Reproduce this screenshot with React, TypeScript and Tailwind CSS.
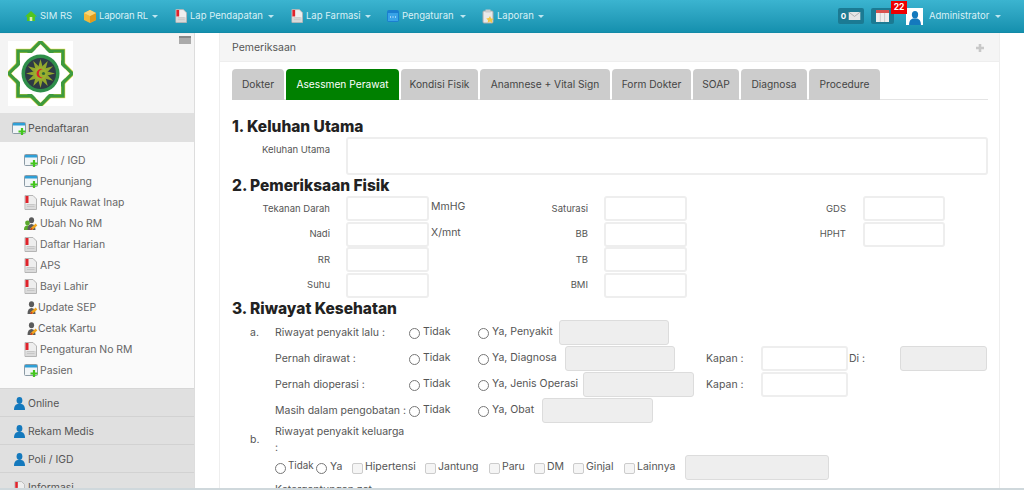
import React from "react";

const Doc = ({ c = "w-[13px] h-[15px]" }: { c?: string }) => (
  <svg viewBox="0 0 13 15" className={c + " shrink-0"}>
    <path d="M1 .5h8l3.5 3.5v10.5H1z" fill="#eee" stroke="#b5b5b5" />
    <rect x="1.5" y="1" width="3" height="7" fill="#e0232b" />
    <path d="M3 9.5h7.5M3 11.5h7.5" stroke="#bbb" />
    <rect x="2" y="9" width="10" height="5" fill="#cfcfcf" opacity=".6" />
  </svg>
);
const WinPlus = ({ c = "w-[14px] h-[13px]" }: { c?: string }) => (
  <svg viewBox="0 0 14 13" className={c + " shrink-0"}>
    <rect x=".5" y=".5" width="13" height="11" rx="1" fill="#f1f5f7" stroke="#8b9aa5" />
    <rect x="1" y="1" width="12" height="2.5" fill="#2f9fd6" />
    <path d="M10 6v7M6.5 9.5h7" stroke="#43c51e" strokeWidth="2.2" />
  </svg>
);
const Person = ({ color = "#1479bd", c = "w-[11px] h-[13px]" }: { color?: string; c?: string }) => (
  <svg viewBox="0 0 11 13" className={c + " shrink-0"}>
    <ellipse cx="5.5" cy="3.5" rx="2.9" ry="3.4" fill={color} />
    <path d="M0 13c0-4 1.6-5.5 3.6-6h3.8c2 .5 3.6 2 3.6 6z" fill={color} />
  </svg>
);
const UserPen = ({ green = false }: { green?: boolean }) => (
  <svg viewBox="0 0 14 13" className="w-[14px] h-[13px] shrink-0">
    {green && <circle cx="3.5" cy="6" r="2.4" fill="#5aa82c" />}
    {green && <path d="M0 13c0-3.5 1.5-4.5 3.5-4.5S7 9.5 7 13z" fill="#5aa82c" />}
    <ellipse cx="7.5" cy="3.2" rx="2.6" ry="3" fill="#5b5b5b" />
    <path d="M3.5 13c0-4 1.5-6 4-6s4 2 4 6z" fill="#5b5b5b" />
    <path d="M7 12.5l5.5-5" stroke="#f2a51d" strokeWidth="2.4" />
    <path d="M7 13l1-2" stroke="#d63a20" strokeWidth="1.4" />
  </svg>
);
const Caret = () => <span className="ml-[5px] w-0 h-0 border-x-[3px] border-x-transparent border-t-[3px] border-t-[#bfe6f0] shrink-0" />;

const Logo = () => {
  const rays = Array.from({ length: 12 }, (_, i) => i * 30);
  return (
    <svg viewBox="0 0 65 65" className="w-[65px] h-[65px] bg-white block">
      <g transform="translate(32.5 32.5)">
        <rect x="-22.5" y="-22.5" width="45" height="45" fill="none" stroke="#d8d23a" strokeWidth="4.4" />
        <rect x="-22.5" y="-22.5" width="45" height="45" transform="rotate(45)" fill="none" stroke="#d8d23a" strokeWidth="4.4" />
        <rect x="-22.5" y="-22.5" width="45" height="45" fill="none" stroke="#3d9a3f" strokeWidth="3.2" />
        <rect x="-22.5" y="-22.5" width="45" height="45" transform="rotate(45)" fill="none" stroke="#3d9a3f" strokeWidth="3.2" />
        <rect x="-20.5" y="-20.5" width="41" height="41" fill="#fff" />
        <rect x="-20.5" y="-20.5" width="41" height="41" transform="rotate(45)" fill="#fff" />
        <circle r="19" fill="#2f8f4a" />
        <circle r="15.5" fill="#2e3a44" />
        {rays.map((a) => (
          <path key={a} d="M-2.6 -5 L0 -14.5 L2.6 -5 Z" fill="#93a82e" transform={`rotate(${a})`} />
        ))}
        <circle r="6.5" fill="#9bb02f" />
        <path d="M2.5 -4.2A4.6 4.6 0 1 0 2.5 4.2A3.6 3.6 0 1 1 2.5 -4.2Z" fill="#d8262c" />
        <circle cx="3" cy="0" r="1.6" fill="#2e6b36" />
      </g>
    </svg>
  );
};

const Section = ({ icon, label }: { icon: React.ReactNode; label: string }) => (
  <div className="h-[28px] bg-[#e0e0e0] border-b border-[#d2d2d2] flex items-center pl-[14px] gap-[4px] text-[10.4px] text-[#555] pt-[2px]">
    <span className="w-[10px] flex justify-center">{icon}</span>
    <span>{label}</span>
  </div>
);

const SubItem = ({ icon, label, gap = "gap-[3px]" }: { icon: React.ReactNode; label: string; gap?: string }) => (
  <div className={"h-[21px] flex items-center " + gap + " text-[10.4px] text-[#666]"}>
    {icon}
    <span>{label}</span>
  </div>
);

const Txt = ({ children, c = "" }: { children: React.ReactNode; c?: string }) => <span className={"shrink-0 " + c}>{children}</span>;
const Input = ({ c }: { c: string }) => <input className={"h-[25px] shrink-0 rounded-[3px] border-2 border-[#eeeeee] bg-white " + c} />;
const Dis = ({ c }: { c: string }) => <input disabled className={"h-[25px] shrink-0 rounded-[3px] border border-[#dcdcdc] bg-[#eeeeee] " + c} />;
const Radio = () => <input type="radio" className="w-[11px] h-[11px] m-0 shrink-0 mt-[2px] appearance-none rounded-full border border-[#777] bg-white" />;
const Check = () => <input type="checkbox" className="w-[11px] h-[11px] m-0 shrink-0 mt-[2px] appearance-none rounded-[2px] border border-[#cccccc] bg-[#f5f5f5]" />;

const Tab = ({ w, label, active = false }: { w: string; label: string; active?: boolean }) => (
  <div className={"h-[31px] rounded-t-[4px] flex items-center justify-center text-[10.2px] whitespace-nowrap " + w + " " + (active ? "bg-[#008000] text-white" : "bg-[#cccccc] text-[#444]")}>{label}</div>
);

const PFRow = ({ a, unit, b, c }: { a: string; unit?: string; b: string; c?: string }) => (
  <div className="h-[25.5px] flex items-center text-[9.5px] text-[#555]">
    <div className="w-[98px] text-right">{a}</div>
    <Input c="ml-[16px] w-[83px]" />
    <div className="w-[61px] pl-[2px] text-[10.5px] pb-[3px]">{unit}</div>
    <div className="w-[98px] text-right">{b}</div>
    <Input c="ml-[16px] w-[83px]" />
    <div className="w-[61px]" />
    <div className="w-[98px] text-right">{c}</div>
    {c ? <Input c="ml-[17px] w-[82px]" /> : null}
  </div>
);

const HRow = ({ mark, label, ya, yaW, input, children }: { mark?: string; label: string; ya: string; yaW: string; input: string; children?: React.ReactNode }) => (
  <div className="h-[26px] flex items-center pl-[18px] text-[10.5px] text-[#555]">
    <Txt c="w-[25px] pt-[1px]">{mark}</Txt>
    <Txt c="w-[134px] pt-[1px]">{label}</Txt>
    <div className={"w-[69px] flex items-center gap-[3px] shrink-0"}><Radio /><span className="pb-[1px]">Tidak</span></div>
    <div className={"flex items-center gap-[3px] shrink-0 " + yaW}><Radio /><span className="pb-[1px]">{ya}</span></div>
    <Dis c={input} />
    {children}
  </div>
);

const App = () => (
  <div className="w-[1024px] h-[490px] overflow-hidden relative bg-white font-['Inter',sans-serif]">
    <header className="h-[33px] bg-gradient-to-b from-[#3bb4d0] to-[#1490ae] border-b border-[#128aa7] flex items-center text-[9.5px] text-[#d9f1f6] pl-[25px] whitespace-nowrap">
      <svg viewBox="0 0 12 12" className="w-[12px] h-[12px] shrink-0"><path d="M6 1l6 5.5h-2V11H2V6.5H0z" fill="#52c51f" /><rect x="4.7" y="7" width="2.6" height="4" fill="#d8f0b0" /></svg>
      <span className="ml-[3px] w-[44px] shrink-0">SIM RS</span>
      <svg viewBox="0 0 12 13" className="w-[12px] h-[13px] shrink-0"><path d="M6 0l6 3v7l-6 3-6-3V3z" fill="#f0b93a" /><path d="M6 6l6-3v7l-6 3z" fill="#e09a1c" /><path d="M0 3l6-3 6 3-6 3z" fill="#f8d577" /></svg>
      <span className="ml-[3px] w-[48px] shrink-0 tracking-[-0.2px]">Laporan RL</span><Caret />
      <Doc c="ml-[17px] w-[12px] h-[14px]" />
      <span className="ml-[3px] w-[73px] shrink-0">Lap Pendapatan</span><Caret />
      <Doc c="ml-[17px] w-[12px] h-[14px]" />
      <span className="ml-[3px] w-[54px] shrink-0">Lap Farmasi</span><Caret />
      <svg viewBox="0 0 12 12" className="ml-[16px] w-[12px] h-[12px] shrink-0"><rect width="12" height="12" rx="2" fill="#1b7fd0" /><rect x="1" y="3" width="10" height="8" fill="#38a3e8" /><path d="M3 7h1M5.5 7h1M8 7h1" stroke="#fff" strokeWidth="1.2" /></svg>
      <span className="ml-[3px] w-[53px] shrink-0">Pengaturan</span><Caret />
      <svg viewBox="0 0 12 15" className="ml-[16px] w-[12px] h-[15px] shrink-0"><rect x="1" y="2" width="10" height="12" rx="1" fill="#e9e9e9" stroke="#aaa" /><rect x="3.5" y=".5" width="5" height="3" fill="#ccc" /><path d="M8 7l1.2 2.4 2.6.4-1.9 1.8.5 2.6L8 12.6 5.6 13.8l.5-2.6-1.9-1.8 2.6-.4z" fill="#f3c646" /></svg>
      <span className="ml-[3px] w-[36px] shrink-0">Laporan</span><Caret />
      <div className="ml-auto mr-[23px] flex items-center relative">
        <div className="w-[26px] h-[16px] rounded-[2px] bg-[#1b7a93] flex items-center justify-center gap-[2px] text-[8px] font-bold text-white">
          0<svg viewBox="0 0 13 9" className="w-[13px] h-[8px]"><rect width="13" height="9" fill="#e6e6e6" /><path d="M0 0l6.5 5L13 0" fill="none" stroke="#aaa" /></svg>
        </div>
        <div className="ml-[7px] w-[23px] h-[16px] rounded-[2px] bg-[#1b7a93] flex items-center justify-center">
          <svg viewBox="0 0 13 12" className="w-[13px] h-[12px]"><rect width="13" height="12" fill="#eee" /><rect width="13" height="3" fill="#d9534f" /><path d="M4.3 3v9M8.6 3v9" stroke="#ccc" /></svg>
        </div>
        <div className="absolute left-[53px] -top-[7px] w-[16px] h-[13px] bg-[#ee0000] flex items-center justify-center text-[8.5px] font-bold text-white">22</div>
        <div className="ml-[12px] w-[17px] h-[17px] bg-white flex items-end justify-center"><Person c="w-[12px] h-[14px]" /></div>
        <span className="ml-[6px] w-[61px] shrink-0">Administrator</span><Caret />
      </div>
    </header>

    <div className="flex h-[455px]">
      <aside className="w-[195px] shrink-0 bg-[#fafafa] border-r border-[#dddddd] overflow-hidden">
        <div className="h-[80px] bg-[#f4f4f4] pl-[8px] pt-[7px] relative border-t border-[#eeeeee]">
          <Logo />
          <div className="absolute right-[3px] top-[2px] w-[12px] h-[8px] bg-[#aaa] border-t-2 border-[#888]" />
        </div>
        <div className="h-[29px] bg-[#e0e0e0] flex items-center pl-[12px] gap-[2px] pt-[2px] text-[10.6px] text-[#555]">
          <WinPlus />
          <span>Pendaftaran</span>
        </div>
        <div className="h-[247px] pl-[24px] pt-[8px] flex flex-col border-b border-[#d6d6d6]">
          <SubItem icon={<WinPlus />} label="Poli / IGD" gap="gap-[2px]" />
          <SubItem icon={<WinPlus />} label="Penunjang" gap="gap-[2px]" />
          <SubItem icon={<Doc />} label="Rujuk Rawat Inap" />
          <SubItem icon={<UserPen green />} label="Ubah No RM" gap="gap-[2px]" />
          <SubItem icon={<Doc />} label="Daftar Harian" />
          <SubItem icon={<Doc />} label="APS" />
          <SubItem icon={<Doc />} label="Bayi Lahir" />
          <SubItem icon={<UserPen />} label="Update SEP" gap="gap-[0px]" />
          <SubItem icon={<UserPen />} label="Cetak Kartu" gap="gap-[0px]" />
          <SubItem icon={<Doc />} label="Pengaturan No RM" />
          <SubItem icon={<WinPlus />} label="Pasien" gap="gap-[2px]" />
        </div>
        <Section icon={<Person />} label="Online" />
        <Section icon={<Person />} label="Rekam Medis" />
        <Section icon={<Person />} label="Poli / IGD" />
        <Section icon={<Doc c="w-[11px] h-[13px]" />} label="Informasi" />
      </aside>

      <main className="flex-1 pl-[24px] pr-[24px] min-w-0">
        <div className="w-[781px] h-[455px] border-x border-[#eeeeee] bg-white overflow-hidden">
          <div className="h-[29px] bg-[#f5f5f5] border-b border-[#eeeeee] flex items-center justify-between pl-[12px] pr-[14px] pt-[1px] text-[10.5px] text-[#555]">
            <span>Pemeriksaan</span>
            <svg viewBox="0 0 10 10" className="w-[10px] h-[10px]"><path d="M5 1v8M1 5h8" stroke="#c8c8c8" strokeWidth="2.6" /></svg>
          </div>
          <div className="pl-[12px] pr-[11px] pt-[7px]">
            <div className="flex gap-[2px] border-b border-[#e4e4e4] h-[31px]">
              <Tab w="w-[52px]" label="Dokter" />
              <Tab w="w-[113px]" label="Asessmen Perawat" active />
              <Tab w="w-[77px]" label="Kondisi Fisik" />
              <Tab w="w-[130px]" label="Anamnese + Vital Sign" />
              <Tab w="w-[79px]" label="Form Dokter" />
              <Tab w="w-[46px]" label="SOAP" />
              <Tab w="w-[66px]" label="Diagnosa" />
              <Tab w="w-[71px]" label="Procedure" />
            </div>
            <h2 className="mt-[16px] h-[21px] leading-[21px] text-[15.5px] font-extrabold text-[#222]">1. Keluhan Utama</h2>
            <div className="flex items-start text-[9.5px] text-[#555]">
              <div className="w-[98px] text-right pt-[6px]">Keluhan Utama</div>
              <textarea className="ml-[16px] h-[38px] w-[642px] rounded-[3px] border-2 border-[#eeeeee] bg-white resize-none" />
            </div>
            <h2 className="h-[21px] leading-[21px] text-[15.5px] font-extrabold text-[#222]">2. Pemeriksaan Fisik</h2>
            <PFRow a="Tekanan Darah" unit="MmHG" b="Saturasi" c="GDS" />
            <PFRow a="Nadi" unit="X/mnt" b="BB" c="HPHT" />
            <PFRow a="RR" b="TB" />
            <PFRow a="Suhu" b="BMI" />
            <h2 className="h-[21px] leading-[21px] text-[15.5px] font-extrabold text-[#222]">3. Riwayat Kesehatan</h2>
            <div>
              <HRow mark="a." label="Riwayat penyakit lalu :" ya="Ya, Penyakit" yaW="w-[81px]" input="w-[110px]" />
              <HRow label="Pernah dirawat :" ya="Ya, Diagnosa" yaW="w-[87px]" input="w-[110px]">
                <Txt c="ml-[31px] w-[55px] pt-[1px]">Kapan :</Txt>
                <Input c="w-[87px]" />
                <Txt c="ml-[1px] w-[51px] pt-[1px]">Di :</Txt>
                <Dis c="w-[87px]" />
              </HRow>
              <HRow label="Pernah dioperasi :" ya="Ya, Jenis Operasi" yaW="w-[105px]" input="w-[111px]">
                <Txt c="ml-[12px] w-[55px] pt-[1px]">Kapan :</Txt>
                <Input c="w-[87px]" />
              </HRow>
              <HRow label="Masih dalam pengobatan :" ya="Ya, Obat" yaW="w-[64px]" input="w-[111px]" />
            </div>
            <div className="pl-[18px] flex mt-[1px] text-[10.5px] text-[#555]">
              <div className="w-[25px] pt-[8px] leading-[15.5px]">b.</div>
              <div className="w-[134px] leading-[15.5px]">Riwayat penyakit keluarga<br />:</div>
            </div>
            <div className="pl-[43px] h-[25px] flex items-center text-[10.5px] text-[#555]">
              <div className="w-[41px] flex items-center gap-[2px] shrink-0"><Radio /><span className="pb-[2px] text-[9.8px]">Tidak</span></div>
              <div className="w-[36px] flex items-center gap-[3px] shrink-0"><Radio /><span className="pb-[2px]">Ya</span></div>
              <div className="w-[73px] flex items-center gap-[2px] shrink-0"><Check /><span className="pb-[2px]">Hipertensi</span></div>
              <div className="w-[64px] flex items-center gap-[2px] shrink-0"><Check /><span className="pb-[2px]">Jantung</span></div>
              <div className="w-[45px] flex items-center gap-[2px] shrink-0"><Check /><span className="pb-[2px]">Paru</span></div>
              <div className="w-[39px] flex items-center gap-[2px] shrink-0"><Check /><span className="pb-[2px]">DM</span></div>
              <div className="w-[51px] flex items-center gap-[2px] shrink-0"><Check /><span className="pb-[2px]">Ginjal</span></div>
              <div className="w-[61px] flex items-center gap-[2px] shrink-0"><Check /><span className="pb-[2px]">Lainnya</span></div>
              <Dis c="w-[144px]" />
            </div>
            <div className="pl-[43px] mt-[2px] leading-[16px] text-[10.5px] text-[#555]">Ketergantungan zat</div>
          </div>
        </div>
      </main>
    </div>
    <div className="absolute left-0 bottom-0 w-full h-[2px] bg-[#cfd8dc]" />
  </div>
);

export default App;
